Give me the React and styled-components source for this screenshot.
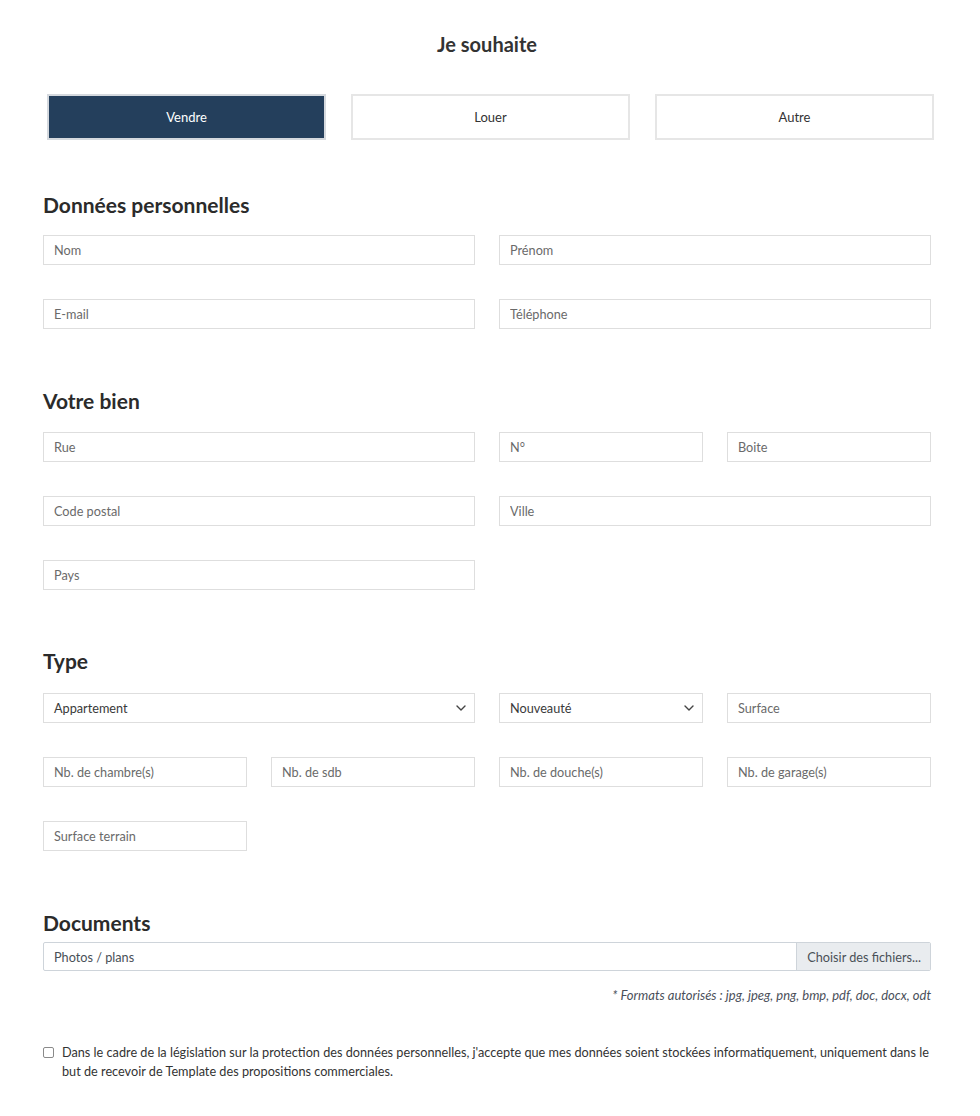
import React from "react";
import styled, { createGlobalStyle } from "styled-components";

const Global = createGlobalStyle`
  html, body { margin: 0; padding: 0; background: #fff; }
  body { font-family: Lato, "Liberation Sans", sans-serif; color: #333; }
  * { box-sizing: border-box; }
`;

const Page = styled.div`
  width: 980px;
  padding: 0 49px 40px 43px;
`;

const Title = styled.h2`
  margin: 0;
  padding-top: 32px;
  text-align: center;
  font-size: 20px;
  line-height: 24px;
  font-weight: 700;
  color: #333;
`;

const Choices = styled.div`
  display: grid;
  grid-template-columns: repeat(3, 1fr);
  gap: 25px;
  margin: 38px -3px 0 4px;
`;

const Choice = styled.button`
  height: 46px;
  border: 2px solid ${(p) => (p.$active ? "#d5d9de" : "#e6e6e6")};
  background: ${(p) => (p.$active ? "#243f5c" : "#fff")};
  color: ${(p) => (p.$active ? "#fff" : "#333")};
  font-family: Lato, "Liberation Sans", sans-serif;
  font-size: 13px;
  cursor: pointer;
`;

const Section = styled.section`
  margin-top: ${(p) => p.$top}px;
`;

const Heading = styled.h3`
  margin: 0 0 ${(p) => p.$gap ?? 18}px;
  font-size: 21px;
  line-height: 24px;
  font-weight: 700;
  color: #2b2b2b;
`;

const Grid = styled.div`
  display: grid;
  grid-template-columns: repeat(4, 1fr);
  column-gap: 24px;
  row-gap: 34px;
`;

const Field = styled.div`
  grid-column: span ${(p) => p.$span || 1};
`;

const Input = styled.input`
  display: block;
  width: 100%;
  height: 30px;
  border: 1px solid #dedede;
  padding: 0 10px;
  font-family: Lato, "Liberation Sans", sans-serif;
  font-size: 12.7px;
  color: #333;
  background: #fff;
  outline: none;
  &::placeholder { color: #6a6a6a; }
`;

const Select = styled.div`
  display: flex;
  align-items: center;
  justify-content: space-between;
  height: 30px;
  border: 1px solid #dedede;
  padding: 0 7px 0 10px;
  font-size: 12.7px;
  color: #3a3a3a;
  background: #fff;
`;

const FileBox = styled.div`
  display: flex;
  height: 29px;
  border: 1px solid #ced4da;
  border-radius: 2px;
  overflow: hidden;
  font-size: 12.7px;
`;

const FileLabel = styled.div`
  flex: 1;
  display: flex;
  align-items: center;
  padding-left: 10px;
  color: #495057;
`;

const FileButton = styled.div`
  display: flex;
  align-items: center;
  padding: 0 9px 0 10px;
  background: #e9ecef;
  border-left: 1px solid #ced4da;
  color: #495057;
`;

const Note = styled.p`
  margin: 16px 0 0;
  text-align: right;
  font-size: 13px;
  line-height: 16px;
  font-style: italic;
  color: #4a4f5a;
`;

const Consent = styled.label`
  display: flex;
  align-items: flex-start;
  gap: 8px;
  margin: 40px -6px 0 0;
  font-size: 12.7px;
  line-height: 19px;
  color: #333;
`;

const Box = styled.span`
  flex: none;
  width: 11px;
  height: 11px;
  margin-top: 4px;
  border: 1px solid #8a8a8a;
  border-radius: 2px;
  background: #fff;
`;

const Chevron = () => (
  <svg width="12" height="12" viewBox="0 0 12 12" fill="none">
    <path d="M2 4l4 4 4-4" stroke="#444" strokeWidth="1.4" strokeLinecap="round" strokeLinejoin="round" />
  </svg>
);

export default function App() {
  return (
    <Page>
      <Global />
      <Title>Je souhaite</Title>
      <Choices>
        <Choice $active>Vendre</Choice>
        <Choice>Louer</Choice>
        <Choice>Autre</Choice>
      </Choices>

      <Section $top={53}>
        <Heading>Données personnelles</Heading>
        <Grid>
          <Field $span={2}><Input placeholder="Nom" /></Field>
          <Field $span={2}><Input placeholder="Prénom" /></Field>
          <Field $span={2}><Input placeholder="E-mail" /></Field>
          <Field $span={2}><Input placeholder="Téléphone" /></Field>
        </Grid>
      </Section>

      <Section $top={60}>
        <Heading $gap={19}>Votre bien</Heading>
        <Grid>
          <Field $span={2}><Input placeholder="Rue" /></Field>
          <Field><Input placeholder="N°" /></Field>
          <Field><Input placeholder="Boite" /></Field>
          <Field $span={2}><Input placeholder="Code postal" /></Field>
          <Field $span={2}><Input placeholder="Ville" /></Field>
          <Field $span={2}><Input placeholder="Pays" /></Field>
        </Grid>
      </Section>

      <Section $top={59}>
        <Heading $gap={20}>Type</Heading>
        <Grid>
          <Field $span={2}><Select>Appartement<Chevron /></Select></Field>
          <Field><Select>Nouveauté<Chevron /></Select></Field>
          <Field><Input placeholder="Surface" /></Field>
          <Field><Input placeholder="Nb. de chambre(s)" /></Field>
          <Field><Input placeholder="Nb. de sdb" /></Field>
          <Field><Input placeholder="Nb. de douche(s)" /></Field>
          <Field><Input placeholder="Nb. de garage(s)" /></Field>
          <Field><Input placeholder="Surface terrain" /></Field>
        </Grid>
      </Section>

      <Section $top={60}>
        <Heading $gap={7}>Documents</Heading>
        <FileBox>
          <FileLabel>Photos / plans</FileLabel>
          <FileButton>Choisir des fichiers...</FileButton>
        </FileBox>
        <Note>* Formats autorisés : jpg, jpeg, png, bmp, pdf, doc, docx, odt</Note>
      </Section>

      <Consent>
        <Box />
        <span>
          Dans le cadre de la législation sur la protection des données personnelles, j'accepte que mes données soient stockées informatiquement, uniquement dans le but de recevoir de Template des propositions commerciales.
        </span>
      </Consent>
    </Page>
  );
}
